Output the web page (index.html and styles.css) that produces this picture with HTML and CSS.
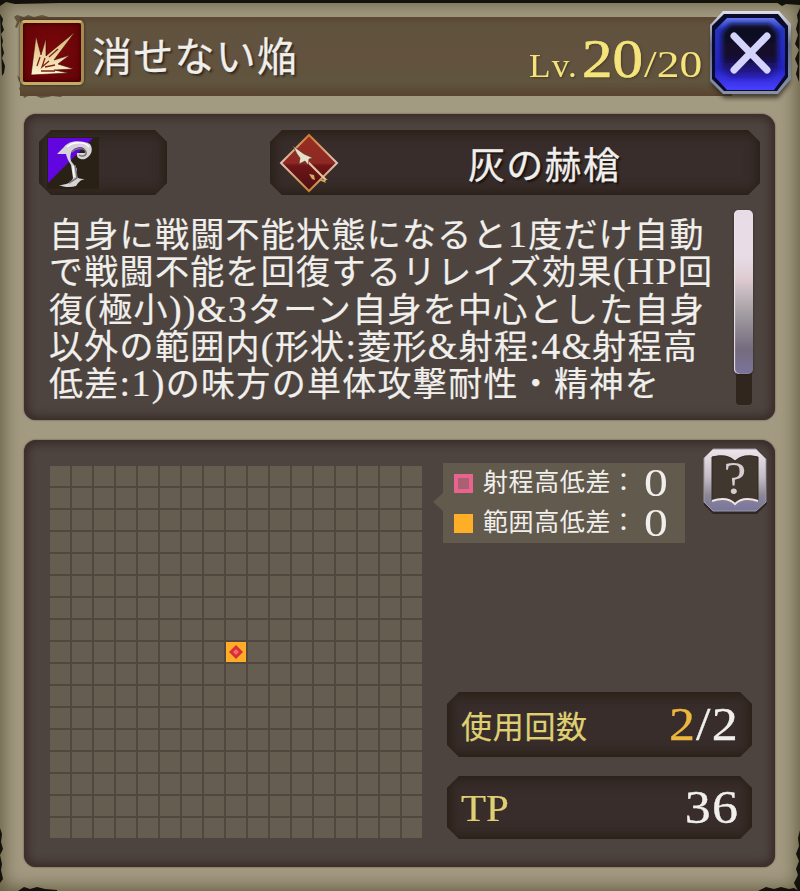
FILE: index.html
```
<!DOCTYPE html>
<html lang="ja">
<head>
    <meta charset="utf-8">
    <meta name="viewport" content="width=device-width,initial-scale=1.0">
    <title>消せない焔</title>
    <link rel="stylesheet" href="styles.css">
</head>
<body>
    <div class="window">
        <svg class="edges" width="800" height="891" viewBox="0 0 800 891">
            <path fill="#13110b" d="M0 0H800V3H250L60 3 15 4 6 2 0 6ZM0 14l3 5-1 5 2 6-3 4 2 7-1 4 2 8-2 5 3 8-1 7-2 3ZM800 0v5l-14-1-4 2-6-4ZM800 8l-3 7 1 6-2 8 2 6-3 9 4 6-4 9 3 7-2 8 3 8ZM0 828l2 6-1 8 2 7-3 6 2 9-1 6 2 9-3 4ZM800 830l-2 8 1 8-3 8 3 7-3 8 2 6-4 8 4 8h4ZM18 891l6-4 6 2 7-2 8 2 12 1v1ZM758 891l8-4 8 2 7-2 8 2 5-1 6 4Z"/>
            <path fill="#63543c" d="M14 17l3-2 7 2 4-2 6 2 8-2 7 2 8 0v4H20l-3 7-2-1 2-5ZM17 75l2 6 2 2-2 6 3 3 2 6 6-3 6 1 5 2 7-1 4-1 9 1 3-3 10 0V84H25Z"/>
        </svg>

        <div class="header">
            <div class="skill-icon">
                <svg width="54" height="54" viewBox="0 0 54 54">
                    <defs>
                        <linearGradient id="flame" x1="0" y1="0" x2="0" y2="1">
                            <stop offset="0" stop-color="#d9b06e"/>
                            <stop offset=".6" stop-color="#eed6a4"/>
                            <stop offset="1" stop-color="#fff6d2"/>
                        </linearGradient>
                    </defs>
                    <path fill="url(#flame)" stroke="#3e0505" stroke-width=".6" d="M6 50L11 11l5 19 5-17 0 18 7-6L50 7 35 27l-6 8 16-5-12 9 16 5-20 1 15 3Z"/>
                    <path fill="none" stroke="#7b2415" stroke-width="1.3" d="M12 41l3-9M20 33l-3 9 7-6M20 42l10-2M16 46l14 0M24 32l9-8"/>
                </svg>
            </div>
            <h1 class="title">消せない焔</h1>
            <div class="level"><span class="lv">Lv.</span><span class="now">20</span><span class="max">/20</span></div>
            <button class="close">
                <svg width="80" height="86" viewBox="0 0 80 86">
                    <defs>
                        <linearGradient id="rim" x1="0" y1="0" x2="0" y2="1">
                            <stop offset="0" stop-color="#e0dfe9"/>
                            <stop offset=".4" stop-color="#66708a"/>
                            <stop offset="1" stop-color="#8791a9"/>
                        </linearGradient>
                        <linearGradient id="blue" x1="0" y1="0" x2="0" y2="1">
                            <stop offset="0" stop-color="#6275ee"/>
                            <stop offset=".16" stop-color="#2433bd"/>
                            <stop offset=".7" stop-color="#2323c0"/>
                            <stop offset="1" stop-color="#493fff"/>
                        </linearGradient>
                        <linearGradient id="core" x1="0" y1="0" x2="0" y2="1">
                            <stop offset="0" stop-color="#10091f"/>
                            <stop offset=".6" stop-color="#130c2d"/>
                            <stop offset="1" stop-color="#2a1fb5"/>
                        </linearGradient>
                        <filter id="soft"><feGaussianBlur stdDeviation="2"/></filter>
                    </defs>
                    <path fill="#262116" opacity=".75" filter="url(#soft)" d="M13 5h55l12 13v54L68 87H14L2 74V18Z"/>
                    <path fill="url(#rim)" d="M13 0h56l12 13v55L68 83H13L0 70V14Z"/>
                    <path fill="#0a0b2b" d="M14 3h54l10 12v51L67 80H14L2 68V15Z"/>
                    <path fill="url(#blue)" d="M17 7h47l11 11v46L64 79H17L5 66V19Z"/>
                    <path fill="url(#core)" filter="url(#soft)" d="M20 13h40l8 9v36l-9 9H20l-8-9V22Z"/>
                    <path fill="none" stroke="#d4d3fb" stroke-width="7" stroke-linecap="round" d="M24 25l33 34M57 25L24 59"/>
                </svg>
            </button>
        </div>

        <div class="panel detail">
            <div class="slots">
                <div class="slot element">
                    <svg width="52" height="52" viewBox="0 0 52 52">
                        <path fill="#292016" d="M0 0h52v52H0z"/>
                        <path fill="#6106df" d="M1 1h45L1 46Z"/>
                        <path fill="#d6d4d6" d="M10 17l7-7c5-7 18-7 26-3 4 6 1 12-5 15-5 1-9-1-8-6l8 0c2-6-6-7-11-4-4 3-4 8-3 12l6 8-1 4c0 5 3 6 9 6-5 1-7 4-9 7-6 2-13 1-17-1 7 0 12-2 14-7l-2-13c-3-5-4-7-5-11Z"/>
                        <path fill="none" stroke="#77737b" stroke-width="1.5" d="M25 15c5-5 13-4 14 0s-4 5-7 3M28 28l2 13-8 5"/>
                        <path fill="none" stroke="#fff" stroke-width="1.5" d="M20 10c7-6 19-5 22 0M26 29l1 11"/>
                    </svg>
                </div>
                <div class="slot weapon">
                    <svg width="60" height="60" viewBox="0 0 60 60">
                        <defs>
                            <linearGradient id="ruby" x1="0" y1="0" x2="0" y2="1">
                                <stop offset="0" stop-color="#963023"/>
                                <stop offset=".5" stop-color="#8e2822"/>
                                <stop offset=".55" stop-color="#6e1517"/>
                                <stop offset="1" stop-color="#4b1014"/>
                            </linearGradient>
                            <linearGradient id="gold" x1="0" y1="0" x2="0" y2="1">
                                <stop offset="0" stop-color="#d07a30"/>
                                <stop offset=".5" stop-color="#e0c4b5"/>
                                <stop offset="1" stop-color="#c78235"/>
                            </linearGradient>
                        </defs>
                        <path fill="url(#ruby)" stroke="url(#gold)" stroke-width="2" d="M30 2l28 28-28 28L2 30Z"/>
                        <path stroke="#e3c6a0" stroke-width="2.2" d="M24 24l23 23"/>
                        <path fill="#e8dfc9" stroke="#503027" stroke-width=".6" d="M14 13l11 8 9 4-4 1-1 6-3-4-6 3 1-6-3-4Z"/>
                        <path fill="#d5aa59" d="M30 41l5 1 1 5-3-1ZM40 47l9-1-3 2 1 2Z"/>
                    </svg>
                    <span>灰の赫槍</span>
                </div>
            </div>
            <div class="description">
                <div class="text">
                    <p>自身に戦闘不能状態になると<span>1</span>度だけ自動</p>
                    <p>で戦闘不能を回復するリレイズ効果<span>(HP</span>回</p>
                    <p>復<span>(</span>極小<span>))&amp;3</span>ターン自身を中心とした自身</p>
                    <p>以外の範囲内<span>(</span>形状<span>:</span>菱形<span>&amp;</span>射程<span>:4&amp;</span>射程高</p>
                    <p>低差<span>:1)</span>の味方の単体攻撃耐性・精神を</p>
                </div>
                <div class="scroll"><div class="thumb"></div></div>
            </div>
        </div>

        <div class="panel range">
            <svg class="grid" width="372" height="372" viewBox="0 0 372 372">
                <defs>
                    <pattern id="cell" width="22" height="22" patternUnits="userSpaceOnUse">
                        <path fill="#655d50" d="M0 0h20v20H0z"/>
                    </pattern>
                </defs>
                <path fill="#51473f" d="M0 0h372v372H0z"/>
                <path fill="url(#cell)" d="M0 0h372v372H0z"/>
                <path fill="#ffad27" d="M176 176h20v20h-20z"/>
                <path fill="#d82e34" d="M186 179l7 7-7 7-7-7Z"/>
                <path fill="#ee6b70" d="M186 183l3 3-3 3-3-3Z"/>
            </svg>
            <div class="side">
                <div class="top">
                    <div class="legend">
                        <div class="row"><i class="mark pink"></i><span class="name">射程高低差：</span><b>0</b></div>
                        <div class="row"><i class="mark orange"></i><span class="name">範囲高低差：</span><b>0</b></div>
                    </div>
                    <button class="help">
                        <svg width="64" height="67" viewBox="0 0 64 67">
                            <defs>
                                <linearGradient id="silver" x1="0" y1="0" x2="0" y2="1">
                                    <stop offset="0" stop-color="#efe6ec"/>
                                    <stop offset=".45" stop-color="#c5bdc5"/>
                                    <stop offset=".75" stop-color="#8c8794"/>
                                    <stop offset="1" stop-color="#7775a0"/>
                                </linearGradient>
                            </defs>
                            <path fill="#2e2725" d="M10 3h46l8 9v44l-10 10H10L1 57V12Z"/>
                            <path fill="url(#silver)" stroke="#9e98a3" d="M10 1h43l10 10v43L53 63H10L1 54V10Z"/>
                            <path fill="#40372e" stroke="#302824" d="M9 9q15-4 23 4 8-8 23-4v44q-15-5-23 2-8-7-23-2Z"/>
                            <path fill="none" stroke="#efe5e6" stroke-width="2" d="M9 53q15-5 23 3 8-8 23-3"/>
                        </svg>
                        <span>?</span>
                    </button>
                </div>
                <div class="slot stat"><span class="label">使用回数</span><span class="value"><em>2</em>/2</span></div>
                <div class="slot stat tp"><span class="label">TP</span><span class="value">36</span></div>
            </div>
        </div>
    </div>
</body>
</html>
```
FILE: styles.css
```
* {
    margin: 0;
    padding: 0;
    box-sizing: border-box;
}

body {
    width: 800px;
    height: 891px;
    overflow: hidden;
    font-family: "Liberation Serif", "Noto Sans CJK JP", sans-serif;
    color: #f0efec;
}

button {
    border: none;
    background: none;
}

svg {
    display: block;
    flex: none;
}

.window {
    position: relative;
    height: 891px;
    padding: 17px 25px 0 24px;
    background: #a39a82;
    box-shadow: inset 0 0 18px 3px #625b3e;
}

/* torn paper round the frame */
.edges {
    position: absolute;
    left: 0;
    top: 0;
}

.header {
    position: relative;
    display: flex;
    height: 79px;
    margin: 0 -17px 18px -4px;
    background: linear-gradient(#5c4733, #60533e 12%, #62523f 50%, #60553e 82%, #59442f);
    background-size: 712px 100%;
    background-repeat: no-repeat;
}

.skill-icon {
    width: 64px;
    height: 65px;
    margin: 3px 0 0 0;
    padding: 2px;
    overflow: hidden;
    background: radial-gradient(#7d080b, #620306);
    border: 3px solid #b8995a;
    border-color: #d0b46d #a78a50 #c4a967 #a38a4e;
    border-radius: 5px;
    box-shadow: 0 0 3px #2c2215, inset 0 0 4px #260203;
}

.title {
    width: 240px;
    margin-left: 8px;
    font-size: 40px;
    font-weight: 400;
    line-height: 81px;
    letter-spacing: 1.3px;
    white-space: nowrap;
    text-shadow: 2px 2px 2px #332a20;
    -webkit-text-stroke: .3px;
}

.level {
    display: flex;
    align-items: baseline;
    width: 182px;
    margin-left: 198px;
    color: #f5e47b;
    line-height: 84px;
    white-space: nowrap;
    text-shadow: 1px 1px 2px #473a29;
}

.level span {
    transform-origin: left;
}

.lv {
    width: 53px;
    font-size: 34px;
    letter-spacing: 1px;
    transform: scaleX(1.04);
}

.now {
    width: 60px;
    font-size: 54px;
    transform: scaleX(1.13);
    -webkit-text-stroke: .7px #f5e47b;
}

.max {
    margin-left: 2px;
    font-size: 37px;
    transform: scaleX(1.23);
}

.close {
    width: 82px;
    height: 86px;
    margin-top: -6px;
    margin-left: -1px;
}

.close svg {
    overflow: visible;
}

.panel {
    position: relative;
    background: #4d443f;
    border-radius: 12px 14px 12px 12px;
    box-shadow: inset 0 0 8px 4px #3a2b27, 0 0 2px #51463a;
}

.detail {
    height: 306px;
    padding: 16px 15px 0;
}

.slots {
    display: flex;
    justify-content: space-between;
}

.slot {
    display: flex;
    align-items: center;
    height: 65px;
    background: #382d2b;
    box-shadow: inset 0 0 12px 4px #2a1f15;
    clip-path: polygon(12px 0, calc(100% - 12px) 0, 100% 12px, 100% calc(100% - 12px), calc(100% - 12px) 100%, 12px 100%, 0 calc(100% - 12px), 0 12px);
}

.element {
    width: 128px;
    padding-left: 8px;
}

.weapon {
    width: 490px;
    padding-left: 9px;
}

.weapon span {
    flex: 1;
    padding-left: 129px;
    font-size: 37px;
    letter-spacing: 1.3px;
    text-shadow: 2px 2px 2px #18110f;
    -webkit-text-stroke: .3px;
}

.description {
    display: flex;
    justify-content: space-between;
    padding: 15px 6px 0 10px;
}

.text {
    width: 670px;
    padding-top: 7px;
    font-size: 34px;
    line-height: 37.3px;
    letter-spacing: 1.3px;
    white-space: nowrap;
    -webkit-text-stroke: .2px;
}

.text p {
    height: 37.3px;
}

.text span {
    font-size: 38px;
    line-height: 0;
}

.scroll {
    display: flex;
    justify-content: center;
    width: 16px;
    height: 195px;
    margin-right: 2px;
    background: #30261d;
    border-radius: 4px;
}

.thumb {
    flex: none;
    width: 19px;
    height: 164px;
    margin-left: -2px;
    border-radius: 5px;
    background: linear-gradient(#e8dde7 28%, #ddcbd1 42%, #a5a0a4 62%, #756b7e 85%, #7b749b);
    box-shadow: inset 1px 0 1px #eee5ec, 0 1px 2px #28221e;
}

.range {
    display: flex;
    height: 427px;
    margin-top: 20px;
    padding: 26px 8px 0 26px;
}

.side {
    flex: 1;
    margin-top: -18px;
    padding-left: 21px;
}

.top {
    display: flex;
    justify-content: space-between;
    height: 244px;
}

.legend {
    position: relative;
    width: 242px;
    height: 80px;
    margin-top: 15px;
    background: #635a4e;
}

/* pointer towards the grid */
.legend::before {
    content: "";
    position: absolute;
    left: -10px;
    top: 30px;
    border: solid transparent;
    border-width: 9px 10px 9px 0;
    border-right-color: #635a4e;
}

.row {
    display: flex;
    align-items: center;
    height: 40px;
    padding-left: 11px;
}

.mark {
    width: 19px;
    height: 19px;
    margin-right: 10px;
}

.pink {
    background: #a96070;
    border: 4px solid #e96391;
}

.orange {
    background: #ffaf27;
}

.name {
    width: 161px;
    font-size: 25px;
    line-height: 36px;
    letter-spacing: .6px;
    white-space: nowrap;
}

.row b {
    font-size: 39px;
    font-weight: 400;
    line-height: 32px;
    transform: scaleX(1.22);
    transform-origin: left;
}

.help {
    position: relative;
    width: 64px;
    height: 67px;
}

.help span {
    position: absolute;
    inset: 0;
    font: 46px/61px "Liberation Serif", serif;
    color: #d9cbd0;
    transform: scaleX(1.12);
}

.stat {
    justify-content: space-between;
    width: 305px;
    margin-left: 4px;
    padding: 0 14px;
}

.tp {
    height: 63px;
    margin-top: 19px;
}

.label {
    font-size: 31px;
    letter-spacing: .7px;
    color: #dfcf73;
    -webkit-text-stroke: .2px;
}

.tp .label {
    font-size: 38px;
    letter-spacing: 0;
    transform: scaleX(1.08);
    transform-origin: left;
}

.value {
    font-size: 46px;
    letter-spacing: 1px;
    margin-right: -1px;
    transform: scaleX(1.13);
    transform-origin: right;
    -webkit-text-stroke: .3px;
}

.value em {
    font-style: normal;
    color: #edb83e;
}
```
